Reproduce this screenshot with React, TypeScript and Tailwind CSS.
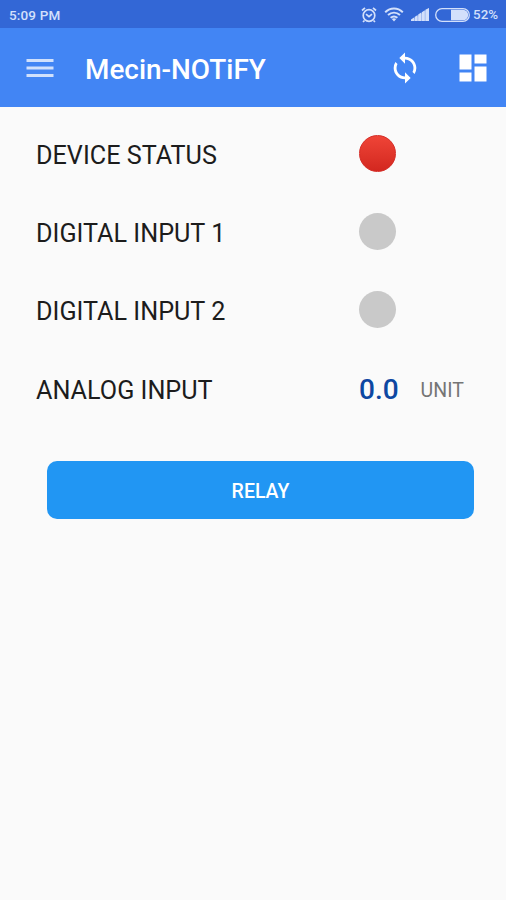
import type { ReactNode } from 'react';
import { MdDashboard, MdMenu, MdSync } from 'react-icons/md';

const StatusBar = () => (
  <div className="flex items-center h-7 pl-[9px] pr-2 bg-[#3367d6] text-[#d3e0fb] font-medium">
    <span className="mt-0.5 text-[13.5px] tracking-[0.15px]">5:09 PM</span>
    <div className="flex items-center ml-auto mt-px">
      <svg width="16" height="18" viewBox="0 0 16 18" fill="none" stroke="currentColor" strokeWidth="1.7">
        <circle cx="8" cy="9.5" r="5.8" />
        <path d="M1 4.5 4 1.8M15 4.5 12 1.8M3.5 14.5 2 16M12.5 14.5 14 16M5 8.2l3 2.5 3-2.5" />
      </svg>
      <svg className="ml-[7px]" width="20" height="15" viewBox="0 0 20 15" fill="none" stroke="currentColor" strokeWidth="2">
        <path d="M1.2 5.2c5.2-5 12.4-5 17.6 0M4 8.1c3.6-3.2 8.4-3.2 12 0M6.6 10.8c2.1-1.7 4.7-1.7 6.8 0" />
        <path d="M7.8 12 10 14.6 12.2 12Q10 10.6 7.8 12Z" fill="currentColor" stroke="none" />
      </svg>
      <svg className="ml-[7px]" width="18" height="13" viewBox="0 0 18 13" fill="currentColor">
        <path d="M0 13v-1.4l3-2V13zM3.6 13V9.1l3-2V13zM7.2 13V6.6l3-2V13zM10.8 13V4.2l3-2V13zM14.4 13V1.8L18 0v13z" />
        <path d="M0 13 18 0v13z" opacity="0.5" />
      </svg>
      <svg className="ml-[6px]" width="35" height="14" viewBox="0 0 35 14">
        <rect x="0.7" y="0.7" width="33.6" height="12.6" rx="6.3" fill="none" stroke="currentColor" strokeWidth="1.3" />
        <path d="M16 1.8h12a5.2 5.2 0 0 1 0 10.4H16z" fill="currentColor" />
      </svg>
      <span className="ml-[3px] mt-px text-[13.3px]">52%</span>
    </div>
  </div>
);

const AppBar = () => (
  <header className="flex items-center h-[79px] pl-[22px] pr-[15px] bg-[#4285f4] text-white">
    <button aria-label="Menu" className="text-[#d0e0fc]">
      <MdMenu size={36} />
    </button>
    <h1 className="ml-[27px] mt-1 text-[27.9px] font-medium whitespace-nowrap">Mecin-NOTiFY</h1>
    <button aria-label="Refresh" className="ml-auto">
      <MdSync size={34} />
    </button>
    <button aria-label="Dashboard" className="ml-[33px]">
      <MdDashboard size={36} />
    </button>
  </header>
);

const Row = ({ label, children }: { label: string; children: ReactNode }) => (
  <div className="flex items-center h-[78.3px]">
    <span className="w-[323px] mt-[5px] text-[25.2px] text-[#1c1c1c] whitespace-nowrap">{label}</span>
    {children}
  </div>
);

const Led = ({ on = false }: { on?: boolean }) => (
  <span
    className={
      on
        ? 'w-[37px] h-[37px] rounded-full bg-linear-to-b from-[#ef4437] to-[#d3271f] border border-[#d52c26]'
        : 'w-[37px] h-[37px] rounded-full bg-[#c9c9c9]'
    }
  />
);

export default function App() {
  return (
    <div className="min-h-screen bg-[#fafafa] font-['Roboto',sans-serif]">
      <StatusBar />
      <AppBar />
      <main className="pt-[7px] pl-9 pr-8">
        <Row label="DEVICE STATUS">
          <Led on />
        </Row>
        <Row label="DIGITAL INPUT 1">
          <Led />
        </Row>
        <Row label="DIGITAL INPUT 2">
          <Led />
        </Row>
        <Row label="ANALOG INPUT">
          <span className="mt-1 text-[28px] font-medium text-[#0d47a1]">0.0</span>
          <span className="ml-[22px] mt-[5px] text-[19.5px] text-[#757575]">UNIT</span>
        </Row>
        <button className="block w-[427px] h-[58px] ml-[11px] mt-[34px] pt-0.5 rounded-[10px] bg-[#2196f3] text-[19.5px] font-medium text-white">
          RELAY
        </button>
      </main>
    </div>
  );
}
